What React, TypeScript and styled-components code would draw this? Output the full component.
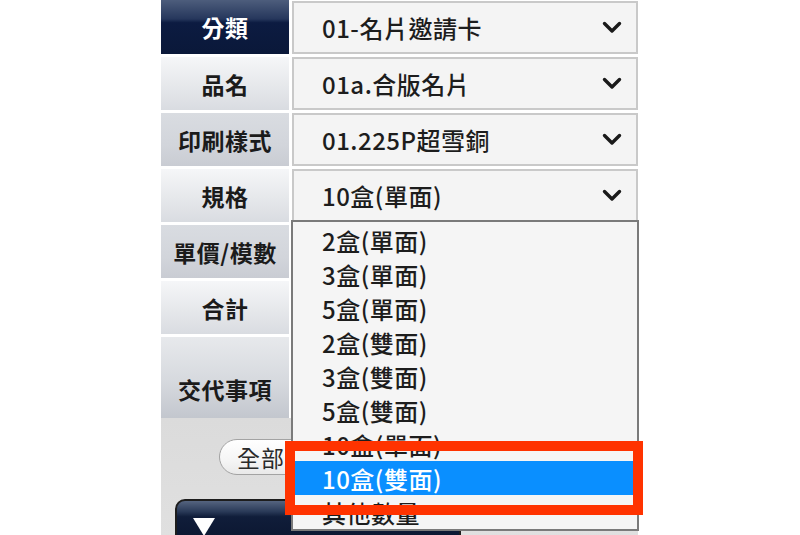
import React from "react";
import styled, { createGlobalStyle, css } from "styled-components";

const GlobalStyle = createGlobalStyle`
  html, body { margin: 0; padding: 0; background: #ffffff; }
  body { font-family: "Noto Sans CJK TC", "Noto Sans", sans-serif; }
  * { box-sizing: border-box; }
`;

const Page = styled.div`
  position: relative;
  width: 800px;
  height: 535px;
  overflow: hidden;
  padding: 1px 0 0 161px;
`;

const Form = styled.div`
  display: grid;
  grid-template-columns: 128px 346px;
  grid-template-rows: repeat(6, 53px) 81px;
  column-gap: 3px;
  row-gap: 3px;
`;

type Tone = "dark" | "light" | "mid" | "tall";

const Label = styled.div<{ $tone: Tone }>`
  display: flex;
  align-items: center;
  justify-content: center;
  font-size: 23px;
  font-weight: 700;
  letter-spacing: 0.5px;
  color: #1b1b1b;
  ${(p) =>
    p.$tone === "dark" &&
    css`
      margin-top: -1px;
      color: #ffffff;
      background: linear-gradient(#4d5d7c 0%, #26375c 35%, #0c1b41 42%, #0a1839 100%);
    `}
  ${(p) =>
    p.$tone === "light" &&
    css`
      background: linear-gradient(#f5f6f8 0%, #e6e8eb 55%, #d9dce1 100%);
    `}
  ${(p) =>
    p.$tone === "mid" &&
    css`
      background: linear-gradient(#d9dce1 0%, #d2d5db 60%, #c9ccd3 100%);
    `}
  ${(p) =>
    p.$tone === "tall" &&
    css`
      align-items: flex-end;
      padding-bottom: 12px;
      background: linear-gradient(#e7e9ec 0%, #d6d9de 55%, #c3c7ce 100%);
    `}
`;

const Field = styled.div`
  position: relative;
  display: flex;
  align-items: center;
  justify-content: space-between;
  padding: 0 14px 0 28px;
  background: #f4f4f4;
  border: 2px solid #c9c9c9;
  font-size: 24px;
  font-weight: 500;
  letter-spacing: 0.5px;
  color: #1d1d1d;
`;

const Chevron = () => (
  <svg width="20" height="13" viewBox="0 0 20 13" aria-hidden="true">
    <polyline points="2.5,2.5 10,10 17.5,2.5" fill="none" stroke="#1a1a1a" strokeWidth="3.4" strokeLinecap="round" strokeLinejoin="round" />
  </svg>
);

const BottomPanel = styled.div`
  width: 477px;
  height: 120px;
  background: linear-gradient(#dbdbdb 0%, #e0e0e0 100%);
  display: flex;
  flex-direction: column;
  align-items: flex-start;
`;

const Pill = styled.button`
  margin: 21px 0 0 58px;
  height: 39px;
  width: 120px;
  padding: 0 0 0 17px;
  text-align: left;
  border: 1px solid #a3a3a3;
  border-radius: 20px;
  background: linear-gradient(#ffffff 0%, #f5f5f5 60%, #e9e9e9 100%);
  font-family: "Noto Sans CJK TC", sans-serif;
  font-size: 23px;
  letter-spacing: 1px;
  color: #2a2a2a;
  white-space: nowrap;
  overflow: hidden;
`;

const DarkBar = styled.div`
  margin: 24px 0 0 14px;
  width: 286px;
  height: 40px;
  border: 2px solid #1d1d1d;
  border-radius: 10px 10px 0 0;
  background: linear-gradient(#55647f 0%, #2a3a58 30%, #101d3a 45%, #0c1832 100%);
  display: flex;
  align-items: flex-start;
  padding: 17px 0 0 16px;
`;

const Triangle = styled.span`
  width: 0;
  height: 0;
  border-left: 11px solid transparent;
  border-right: 11px solid transparent;
  border-top: 18px solid #ffffff;
`;

const Dropdown = styled.ul`
  position: absolute;
  left: -3px;
  top: 100%;
  width: 348px;
  margin: 0;
  padding: 1px 2px 0 2px;
  list-style: none;
  background: #f5f5f5;
  border: 2px solid #7a7a7a;
  z-index: 5;
`;

const Option = styled.li<{ $selected?: boolean }>`
  height: 34px;
  display: flex;
  align-items: center;
  padding-left: 27px;
  font-size: 24px;
  font-weight: 500;
  letter-spacing: 0.5px;
  color: ${(p) => (p.$selected ? "#ffffff" : "#1d1d1d")};
  background: ${(p) => (p.$selected ? "#0a8fff" : "transparent")};
`;

const Highlight = styled.div`
  position: absolute;
  left: 285px;
  top: 441px;
  width: 358px;
  height: 74px;
  border: 10px solid #ff3300;
  z-index: 10;
  pointer-events: none;
`;

const options = [
  "2盒(單面)",
  "3盒(單面)",
  "5盒(單面)",
  "2盒(雙面)",
  "3盒(雙面)",
  "5盒(雙面)",
  "10盒(單面)",
  "10盒(雙面)",
  "其他數量",
];

export default function App() {
  return (
    <>
      <GlobalStyle />
      <Page>
        <Form>
          <Label $tone="dark">分類</Label>
          <Field>
            01-名片邀請卡
            <Chevron />
          </Field>
          <Label $tone="light">品名</Label>
          <Field>
            01a.合版名片
            <Chevron />
          </Field>
          <Label $tone="mid">印刷樣式</Label>
          <Field>
            01.225P超雪銅
            <Chevron />
          </Field>
          <Label $tone="light">規格</Label>
          <Field>
            10盒(單面)
            <Chevron />
            <Dropdown>
              {options.map((o) => (
                <Option key={o} $selected={o === "10盒(雙面)"}>
                  {o}
                </Option>
              ))}
            </Dropdown>
          </Field>
          <Label $tone="mid">單價/模數</Label>
          <Field />
          <Label $tone="light">合計</Label>
          <Field />
          <Label $tone="tall">交代事項</Label>
          <Field />
        </Form>
        <BottomPanel>
          <Pill>全部展開</Pill>
          <DarkBar>
            <Triangle />
          </DarkBar>
        </BottomPanel>
        <Highlight />
      </Page>
    </>
  );
}
